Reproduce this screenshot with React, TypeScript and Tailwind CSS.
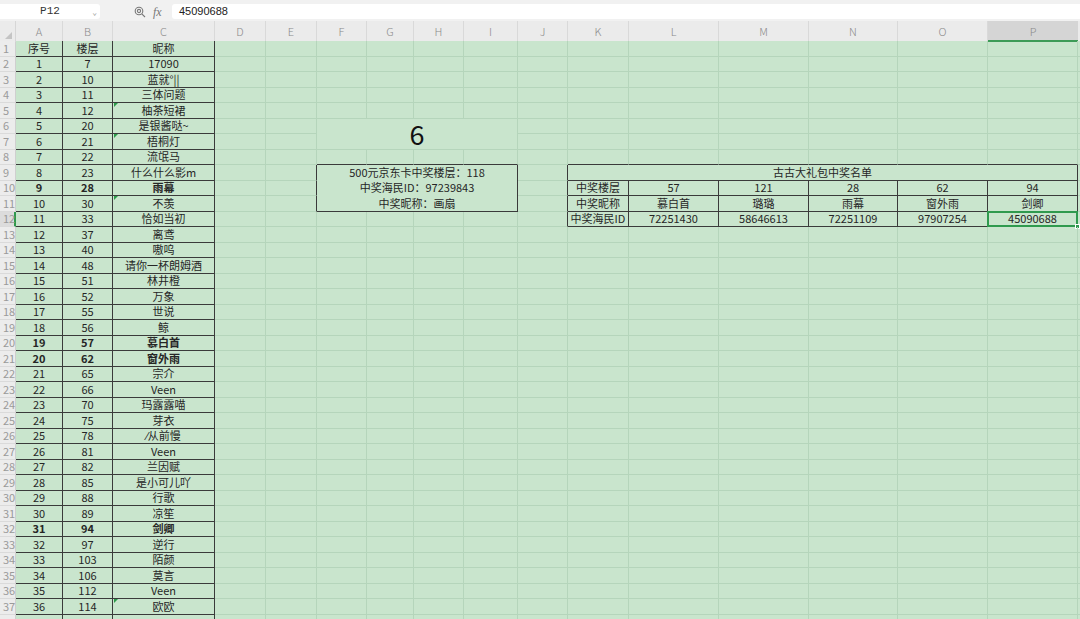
import React from 'react';

const COLS = ['A', 'B', 'C', 'D', 'E', 'F', 'G', 'H', 'I', 'J', 'K', 'L', 'M', 'N', 'O', 'P'];
const ROWS = 38;

const people: [number, string, boolean?][] = [
  [7, '17090'],
  [10, '蓝就°||'],
  [11, '三体问题'],
  [12, '柚茶短裙'],
  [20, '是银酱哒~'],
  [21, '梧桐灯'],
  [22, '流氓马'],
  [23, '什么什么影m'],
  [28, '雨幕', true],
  [30, '不羡'],
  [33, '恰如当初'],
  [37, '离鸢'],
  [40, '嗷呜'],
  [48, '请你一杯朗姆酒'],
  [51, '林井橙'],
  [52, '万象'],
  [55, '世说'],
  [56, '鲸'],
  [57, '慕白首', true],
  [62, '窗外雨', true],
  [65, '宗介'],
  [66, 'Veen'],
  [70, '玛露露喵'],
  [75, '芽衣'],
  [78, '⁄从前慢'],
  [81, 'Veen'],
  [82, '兰因赋'],
  [85, '是小可儿吖'],
  [88, '行歌'],
  [89, '凉笙'],
  [94, '剑卿', true],
  [97, '逆行'],
  [103, '陌颜'],
  [106, '莫言'],
  [112, 'Veen'],
  [114, '欧欧'],
];

type Cell = { text: string; bold?: boolean };
const cells: Record<string, Cell> = {};
const put = (r: number, c: number, text: string, bold?: boolean) => {
  cells[`${r}-${c}`] = { text, bold };
};

put(1, 0, '序号');
put(1, 1, '楼层');
put(1, 2, '昵称');
people.forEach(([floor, name, bold], i) => {
  const r = i + 2;
  put(r, 0, String(i + 1), bold);
  put(r, 1, String(floor), bold);
  put(r, 2, name, bold);
});

const prizeRows = [
  ['中奖楼层', '57', '121', '28', '62', '94'],
  ['中奖昵称', '慕白首', '璐璐', '雨幕', '窗外雨', '剑卿'],
  ['中奖海民ID', '72251430', '58646613', '72251109', '97907254', '45090688'],
];
prizeRows.forEach((row, i) => row.forEach((t, j) => put(10 + i, 10 + j, t)));

const flagged = ['5-2', '7-2', '11-2', '37-2'];

const inTable = (r: number, c: number) =>
  (c >= 0 && c <= 2 && r >= 1 && r <= ROWS) ||
  (c >= 5 && c <= 8 && r >= 9 && r <= 11) ||
  (c >= 10 && c <= 15 && r >= 9 && r <= 12);

// merged areas: F6:I7, F9:I11, K9:P9
const covered = (r: number, c: number) =>
  (r >= 6 && r <= 7 && c >= 5 && c <= 8 && !(r === 6 && c === 5)) ||
  (r >= 9 && r <= 11 && c >= 5 && c <= 8 && !(r === 9 && c === 5)) ||
  (r === 9 && c >= 11 && c <= 15);

const gridCls =
  'grid grid-cols-[16px_47px_50px_102px_51px_51px_50px_47px_50px_54px_50px_61px_90px_90px_89px_90px_90px_1fr]';

function SheetCell({ r, c }: { r: number; c: number }) {
  const cell = cells[`${r}-${c}`];
  const darkR = inTable(r, c) || inTable(r, c + 1);
  const darkB = inTable(r, c) || inTable(r + 1, c);
  const selected = r === 12 && c === 15;
  return (
    <div
      className={`relative flex h-[15.5px] items-center justify-center overflow-visible whitespace-nowrap border-r border-b leading-none ${
        darkR ? 'border-r-[#3a3a3a]' : 'border-r-[#b5d5bb]'
      } ${darkB ? 'border-b-[#3a3a3a]' : 'border-b-[#b5d5bb]'} ${cell?.bold ? 'font-bold' : ''}`}
    >
      {cell?.text}
      {flagged.includes(`${r}-${c}`) && (
        <span className="absolute left-px top-0 h-0 w-0 border-t-[4px] border-r-[4px] border-t-[#2b9a49] border-r-transparent" />
      )}
      {selected && (
        <>
          <span className="pointer-events-none absolute -left-px -top-px -right-px -bottom-px border-2 border-[#2f9a4e]" />
          <span className="absolute -bottom-[3px] -right-[3px] h-[5px] w-[5px] border border-white bg-[#2f9a4e]" />
        </>
      )}
    </div>
  );
}

export default function App() {
  const body: React.ReactNode[] = [];
  for (let r = 1; r <= ROWS; r++) {
    body.push(
      <div
        key={`rh-${r}`}
        className={`flex h-[15.5px] items-center border-b border-b-[#dadada] pl-[3px] text-[11px] leading-none text-[#9a9a9a] ${
          r === 12 ? 'border-r-2 border-r-[#2f9a4e] bg-[#dcdcdc]' : 'border-r border-r-[#cfcfcf] bg-[#ececec]'
        }`}
      >
        {r < ROWS ? r : ''}
      </div>
    );
    for (let c = 0; c < 16; c++) {
      if (covered(r, c)) continue;
      if (r === 6 && c === 5) {
        body.push(
          <div
            key="big6"
            className="col-span-4 row-span-2 flex items-center justify-center border-r border-b border-r-[#b5d5bb] border-b-[#b5d5bb] text-[27px] leading-none text-[#111]"
          >
            6
          </div>
        );
        continue;
      }
      if (r === 9 && c === 5) {
        body.push(
          <div
            key="jd"
            className="col-span-4 row-span-3 -ml-px -mt-px flex flex-col items-center justify-center border border-[#3a3a3a] text-[11px] leading-[15.5px]"
          >
            <span>500元京东卡中奖楼层：118</span>
            <span>中奖海民ID：97239843</span>
            <span>中奖昵称：画扇</span>
          </div>
        );
        continue;
      }
      if (r === 9 && c === 10) {
        body.push(
          <div
            key="title"
            className="col-span-6 flex h-[15.5px] items-center justify-center border-r border-b border-r-[#3a3a3a] border-b-[#3a3a3a] leading-none"
          >
            古古大礼包中奖名单
          </div>
        );
        continue;
      }
      body.push(<SheetCell key={`${r}-${c}`} r={r} c={c} />);
    }
    body.push(<div key={`f-${r}`} className="h-[15.5px] border-b border-b-[#b5d5bb]" />);
  }

  return (
    <div className="h-[619px] w-[1080px] overflow-hidden bg-[#c9e5cd] font-['Noto_Sans_CJK_SC','Noto_Sans',sans-serif] text-[11px] text-[#262626]">
      {/* formula bar */}
      <div className="flex h-[21px] items-start bg-[#f1f1f1] pt-[4px]">
        <div className="relative flex h-[15px] w-[100px] items-center justify-center rounded-r-[3px] bg-white font-['Liberation_Mono',monospace] text-[11px] text-[#333]">
          P12
          <span className="absolute right-[3px] top-[3px] text-[8px] text-[#999]">⌄</span>
        </div>
        <div className="flex h-[15px] w-[72px] items-center gap-[7px] pl-[34px] text-[#777]">
          <svg width="12" height="12" viewBox="0 0 12 12" fill="none" stroke="#777" strokeWidth="1.1">
            <circle cx="5" cy="5" r="3.8" />
            <circle cx="5" cy="5" r="1.6" />
            <path d="M7.8 7.8 L11 11" />
          </svg>
          <span className="font-['Liberation_Serif',serif] text-[12px] italic leading-none">fx</span>
        </div>
        <div className="flex h-[15px] flex-1 items-center rounded-l-[3px] bg-white pl-[7px] font-['Liberation_Sans',sans-serif] text-[11px] text-[#222]">
          45090688
        </div>
      </div>

      {/* column headers */}
      <div className={`${gridCls} h-[20px] bg-[#ebebeb]`}>
        <div className="relative border-r border-r-[#d6d6d6]">
          <svg className="absolute bottom-[3px] right-[3px]" width="7" height="7" viewBox="0 0 7 7">
            <path d="M7 0 L7 7 L0 7 Z" fill="#c4c4c4" />
          </svg>
        </div>
        {COLS.map((l) => (
          <div
            key={l}
            className={`flex items-center justify-center text-[11px] font-light text-[#8a8a8a] ${
              l === 'P' ? 'border-b-2 border-b-[#3d9b57] bg-[#d5d5d5] pt-[2px]' : 'border-r border-r-[#d9d9d9]'
            }`}
          >
            {l}
          </div>
        ))}
        <div />
      </div>

      {/* sheet */}
      <div className={`${gridCls} grid-rows-[repeat(38,15.5px)]`}>{body}</div>
    </div>
  );
}
